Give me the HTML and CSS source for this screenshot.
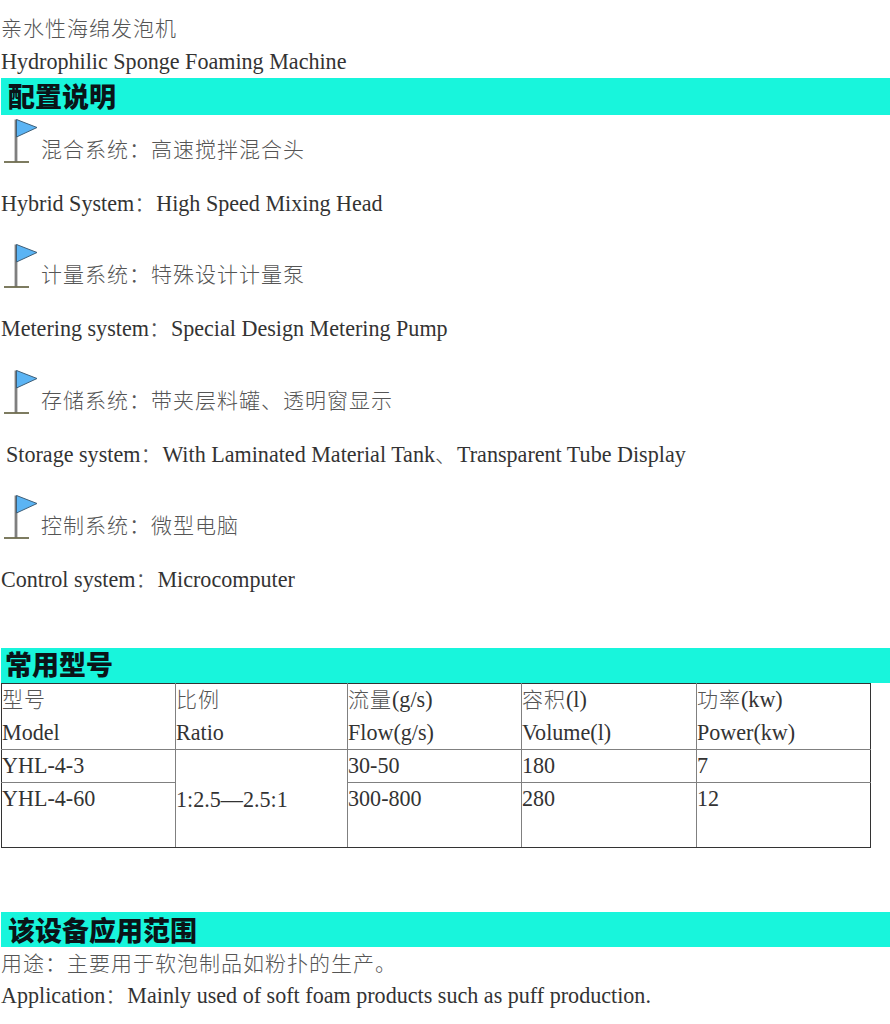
FILE: index.html
```html
<!DOCTYPE html>
<html lang="zh">
<head>
<meta charset="utf-8">
<title>亲水性海绵发泡机</title>
<link rel="stylesheet" href="styles.css">
</head>
<body>
<svg class="defs" width="0" height="0" aria-hidden="true"><defs>
<symbol id="flag" viewBox="0 0 34 46">
<path d="M12 1.5V44" stroke="#7f7f7f" stroke-width="2.8" fill="none"/>
<path d="M12.5 1.5 33 9.5 12.5 19Z" fill="#5bb4f4" stroke="#3f5f78" stroke-width="1"/>
<path d="M0 44H25" stroke="#6f6c4e" stroke-width="1.8" fill="none"/>
</symbol>
</defs></svg>
<p class="line"><span class="cn">亲水性海绵发泡机</span></p>
<p class="line">Hydrophilic Sponge Foaming Machine</p>
<h2 class="band band-config">配置说明</h2>

<section class="item">
<div class="flagrow"><svg class="flag"><use href="#flag"/></svg><span class="cn">混合系统：高速搅拌混合头</span></div>
<p class="line">Hybrid System<span class="cn">：</span>High Speed Mixing Head</p>
</section>
<section class="item">
<div class="flagrow"><svg class="flag"><use href="#flag"/></svg><span class="cn">计量系统：特殊设计计量泵</span></div>
<p class="line">Metering system<span class="cn">：</span>Special Design Metering Pump</p>
</section>
<section class="item">
<div class="flagrow"><svg class="flag"><use href="#flag"/></svg><span class="cn">存储系统：带夹层料罐、透明窗显示</span></div>
<p class="line indent">Storage system<span class="cn">：</span>With Laminated Material Tank<span class="cn">、</span>Transparent Tube Display</p>
</section>
<section class="item">
<div class="flagrow"><svg class="flag"><use href="#flag"/></svg><span class="cn">控制系统：微型电脑</span></div>
<p class="line">Control system<span class="cn">：</span>Microcomputer</p>
</section>

<h2 class="band band-models">常用型号</h2>
<table class="models">
<colgroup><col class="c1"><col class="c2"><col class="c3"><col class="c4"><col class="c5"></colgroup>
<tr class="r-head">
<td><span class="cn">型号</span><br>Model</td>
<td><span class="cn">比例</span><br>Ratio</td>
<td><span class="cn">流量</span>(g/s)<br>Flow(g/s)</td>
<td><span class="cn">容积</span>(l)<br>Volume(l)</td>
<td><span class="cn">功率</span>(kw)<br>Power(kw)</td>
</tr>
<tr class="r-a">
<td>YHL-4-3</td>
<td rowspan="2" class="mid">1:2.5—2.5:1</td>
<td>30-50</td>
<td>180</td>
<td>7</td>
</tr>
<tr class="r-b">
<td>YHL-4-60</td>
<td>300-800</td>
<td>280</td>
<td>12</td>
</tr>
</table>

<h2 class="band band-scope">该设备应用范围</h2>
<p class="line line-short"><span class="cn">用途：主要用于软泡制品如粉扑的生产。</span></p>
<p class="line">Application<span class="cn">：</span>Mainly used of soft foam products such as puff production.</p>
</body>
</html>
```

FILE: styles.css
```css
html, body {
  margin: 0;
  background: #fff;
}
body {
  width: 890px;
  height: 1024px;
  overflow: hidden;
  padding: 12px 0 0 1px;
  box-sizing: border-box;
  font-family: "Liberation Serif", "Noto Sans CJK SC", serif;
  font-size: 22.1px;
  color: #333;
}
.defs {
  position: absolute;
}
.line {
  margin: 0;
  height: 33px;
  line-height: 33px;
  white-space: nowrap;
}
.line-short {
  height: 32px;
}
.cn {
  font-family: "Noto Sans CJK SC", sans-serif;
  font-weight: 300;
  color: #555;
  font-size: 21px;
  letter-spacing: 1px;
  line-height: 1;
}
.band {
  margin: 0;
  height: 37px;
  padding-left: 7px;
  background: #18f5dc;
  color: #0a1418;
  font-family: "Noto Sans CJK SC", sans-serif;
  font-size: 27px;
  font-weight: 900;
}
.band-config {
  line-height: 35px;
}
.item {
  height: 125.33px;
}
.flagrow {
  height: 72px;
  padding: 3px 0 0 3px;
  box-sizing: border-box;
  display: flex;
  align-items: flex-start;
  gap: 3px;
}
.flagrow .cn {
  margin-top: 20px;
}
.flag {
  width: 34px;
  height: 46px;
  flex: none;
}
.indent {
  padding-left: 5px;
}
.band-models {
  margin-top: 32px;
  height: 35px;
  line-height: 32px;
  padding-left: 4px;
}
.models {
  width: 870px;
  table-layout: fixed;
  border-collapse: collapse;
  line-height: 32px;
}
.models td {
  border: 1px solid #808080;
  padding: 0;
  vertical-align: top;
  white-space: nowrap;
}
.models .r-head td {
  border-top-color: #333;
  line-height: 32.5px;
}
.models td:first-child {
  border-left-color: #333;
}
.models td:last-child {
  border-right-color: #333;
}
.models .r-b td,
.models .mid {
  border-bottom-color: #333;
}
.models .mid {
  vertical-align: middle;
  padding-top: 2px;
}
.c1 { width: 174px; }
.c2 { width: 172px; }
.c3 { width: 174px; }
.c4 { width: 175px; }
.c5 { width: 174px; }
.r-head { height: 66px; }
.r-a { height: 33px; }
.r-b { height: 65px; }
.band-scope {
  margin-top: 64px;
  height: 35px;
  line-height: 35px;
}
```
